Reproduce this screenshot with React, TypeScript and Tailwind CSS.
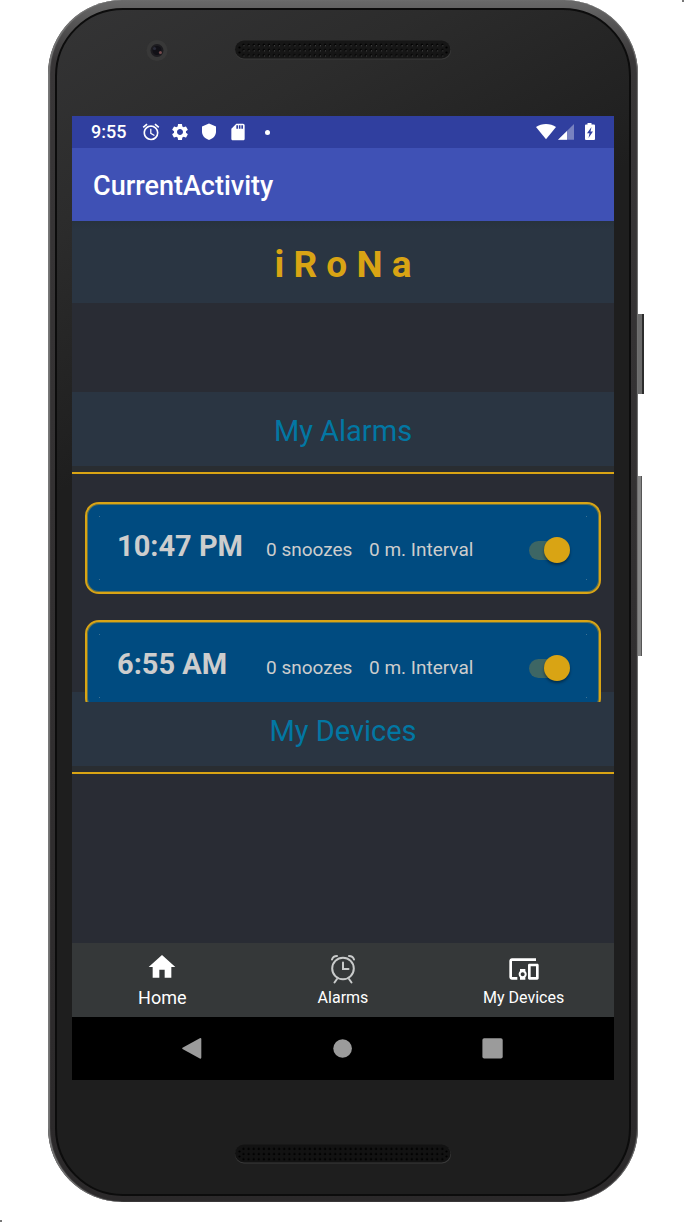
import React, { useId, useState } from "react";
import { MdAlarm, MdHome, MdOutlineDevicesOther, MdSdCard, MdSettings } from "react-icons/md";

type Alarm = { time: string; snoozes: number; interval: number };

const ALARMS: Alarm[] = [
  { time: "10:47 PM", snoozes: 0, interval: 0 },
  { time: "6:55 AM", snoozes: 0, interval: 0 },
];

function Speaker({ light = false }: { light?: boolean }) {
  const id = useId();
  return (
    <svg className="h-5 w-[218px]" viewBox="0 0 218 20" aria-hidden="true">
      <defs>
        <pattern id={id} width="5.1" height="5.2" patternUnits="userSpaceOnUse" x="7" y="2.4">
          <circle cx="2.5" cy="2.5" r="1.2" fill="#020202" />
          {light && <circle cx="2.9" cy="3.3" r="0.6" fill="#4c4c4c" />}
        </pattern>
      </defs>
      <rect x="1" y="1.5" width="216" height="18" rx="9" fill="#3a3a3a" />
      <rect x="1" y="0.5" width="215.5" height="18" rx="9" fill={light ? "#161616" : "#121212"} />
      <rect x="7" y="2.4" width="204" height="15.6" fill={`url(#${id})`} />
      <circle cx="5.5" cy="7.5" r="1.1" fill="#000" />
      <circle cx="5.5" cy="12.5" r="1.1" fill="#000" />
      <circle cx="212.5" cy="7.5" r="1.1" fill="#000" />
      <circle cx="212.5" cy="12.5" r="1.1" fill="#000" />
    </svg>
  );
}

function Camera() {
  return (
    <svg className="h-6 w-6" viewBox="0 0 24 24" aria-hidden="true">
      <circle cx="12" cy="10.500" r="10.5" fill="#383838" />
      <circle cx="12" cy="10.500" r="6.5" fill="#1d1c20" />
      <circle cx="12" cy="10.500" r="4.5" fill="#121117" />
      <circle cx="9.5" cy="8.5" r="1.6" fill="#2a2b38" />
      <circle cx="15.4" cy="12.4" r="1.5" fill="#754b4d" />
    </svg>
  );
}

function StatusBar() {
  return (
    <div className="flex h-8 items-center bg-[#303f9f] pl-[19px] pr-[18px] text-white">
      <span className="w-[50px] text-[18px] font-medium leading-8">9:55</span>
      <div className="flex items-center gap-[9px]">
        <MdAlarm className="size-5" />
        <MdSettings className="size-5" />
        <svg className="size-5" viewBox="0 0 20 20" aria-hidden="true">
          <path d="M10 1.5 17 4.6v5.2c0 3.6-2.6 6.8-7 8.2-4.4-1.4-7-4.600-7-8.200V4.600z" fill="currentColor" />
        </svg>
        <MdSdCard className="size-5" />
        <span className="flex size-5 items-center justify-center">
          <span className="size-[5px] rounded-full bg-white" />
        </span>
      </div>
      <div className="ml-auto flex items-center">
        <svg className="h-5 w-[22px]" viewBox="0 0 22 20" aria-hidden="true">
          <path d="M1 5C6.500.900 15.500.900 21 5L11 17.200z" fill="currentColor" />
        </svg>
        <svg className="mr-[9px] h-5 w-[18px]" viewBox="0 0 18 20" aria-hidden="true">
          <path d="M1 17.800 17 2v15.800z" fill="currentColor" opacity="0.35" />
          <path d="M1 17.800 10 9v8.800z" fill="currentColor" />
        </svg>
        <svg className="h-5 w-[12px]" viewBox="0 0 12 20" aria-hidden="true">
          <path d="M3.500 1h4v1.600H10a1 1 0 0 1 1 1V17a1 1 0 0 1-1 1H2a1 1 0 0 1-1-1V3.600a1 1 0 0 1 1-1h1.500z" fill="currentColor" />
          <path d="M7.500 5 3 11.200h2.500L4.500 16 9 9.600H6.500z" fill="#303f9f" />
        </svg>
      </div>
    </div>
  );
}

function SectionHeader({ title }: { title: string }) {
  return (
    <header>
      <h2 className="bg-[#2a3542] pb-[15px] pt-[19px] text-center text-[29px] font-normal leading-10 text-[#0277a3]">
        {title}
      </h2>
      <div className="h-[6px] bg-[#292d31]" />
      <div className="h-[2px] bg-[#d9a414]" />
    </header>
  );
}

function AlarmCard({ alarm }: { alarm: Alarm }) {
  const [on, setOn] = useState(true);
  return (
    <li className="relative grid h-[92px] shrink-0 grid-cols-[149px_103px_1fr_auto] items-center rounded-[14px] border-2 border-[#d9a414] bg-[#004b80] pl-[30px] pr-7 text-[19px] text-[#cdcdcd] shadow-[inset_0_0_0_1px_rgba(217,164,20,0.45)]">
      <span className="absolute left-3 top-3 size-px bg-[#3d7294]" />
      <span className="absolute right-3 top-3 size-px bg-[#3d7294]" />
      <span className="absolute bottom-3 left-3 size-px bg-[#3d7294]" />
      <span className="absolute bottom-3 right-3 size-px bg-[#3d7294]" />
      <span className="whitespace-nowrap pb-1 text-[29px] font-bold leading-9">{alarm.time}</span>
      <span className="whitespace-nowrap pt-1">{alarm.snoozes} snoozes</span>
      <span className="whitespace-nowrap pt-1">{alarm.interval} m. Interval</span>
      <label className="relative mt-1 flex h-7 w-[42px] items-center">
        <input
          type="checkbox"
          role="switch"
          aria-label={`Alarm at ${alarm.time}`}
          checked={on}
          onChange={(e) => setOn(e.target.checked)}
          className="peer h-[19px] w-[38px] cursor-pointer appearance-none rounded-full bg-[#5f6f78] checked:bg-[#3d6664]"
        />
        <span className="pointer-events-none absolute left-0 size-[26px] rounded-full bg-[#b9b9b9] shadow-[0_2px_3px_rgba(0,0,0,0.4)] peer-checked:left-[15px] peer-checked:bg-[#d9a414]" />
      </label>
    </li>
  );
}

function ClockIcon() {
  return (
    <svg className="size-8" viewBox="-1 -1 32 32" fill="none" stroke="#c9cbcb" strokeWidth="2" strokeLinecap="round" aria-hidden="true">
      <circle cx="15" cy="14.500" r="10.800" />
      <path d="M15 8.500v6.500h5.500" />
      <path d="M4 5.500C4.600 3.400 6.500 2 9 2M26 5.500C25.400 3.400 23.500 2 21 2" />
      <path d="m9 25-2.500 3.500M21 25l2.500 3.500" />
    </svg>
  );
}

function BottomNav() {
  return (
    <nav className="grid h-[74px] grid-cols-3 bg-[#353839] text-white">
      <a href="#home" className="flex flex-col items-center pt-2">
        <MdHome className="size-8" />
        <span className="text-[18px] leading-[30px]">Home</span>
      </a>
      <a href="#alarms" className="flex flex-col items-center pt-[10px]">
        <ClockIcon />
        <span className="text-[16px] leading-[26px]">Alarms</span>
      </a>
      <a href="#devices" className="flex flex-col items-center pt-[10px]">
        <MdOutlineDevicesOther className="size-8" />
        <span className="text-[16px] leading-[26px]">My Devices</span>
      </a>
    </nav>
  );
}

function SystemKeys() {
  return (
    <div className="flex h-[63px] items-center justify-center gap-[122px] bg-black text-[#9b9b9b]">
      <button type="button" aria-label="Back" className="size-7">
        <svg viewBox="0 0 28 28" aria-hidden="true">
          <path d="M3.500 12.800 20.800 3.200Q22.300 2.600 22.300 4v18.600q0 1.500-1.500.900L3.500 14q-.800-.600 0-1.200z" fill="currentColor" />
        </svg>
      </button>
      <button type="button" aria-label="Home screen" className="size-7">
        <svg viewBox="0 0 28 28" aria-hidden="true">
          <circle cx="13.600" cy="13.500" r="9.300" fill="currentColor" />
        </svg>
      </button>
      <button type="button" aria-label="Recent apps" className="size-7">
        <svg viewBox="0 0 28 28" aria-hidden="true">
          <rect x="3.400" y="3.200" width="20.300" height="20.300" rx="1.800" fill="currentColor" />
        </svg>
      </button>
    </div>
  );
}

function Screen() {
  return (
    <main className="flex flex-col bg-[#292c34]">
      <StatusBar />
      <div className="flex h-[73px] items-center bg-[#3f51b5] px-[21px] pt-[3px] text-[27px] font-medium text-white">
        CurrentActivity
      </div>
      <h1 className="mb-[89px] bg-gradient-to-b from-[#27323d] to-[#2a3542] to-10% pb-4 pt-[21px] text-center text-[37px] font-bold leading-[45px] text-[#d9a414]">
        i R o N a
      </h1>
      <section>
        <SectionHeader title="My Alarms" />
        <ul className="relative z-10 -mb-[10px] flex h-[228px] flex-col gap-[26px] overflow-y-auto px-[13px] pt-7 [scrollbar-width:none]">
          {ALARMS.map((a) => (
            <AlarmCard key={a.time} alarm={a} />
          ))}
        </ul>
      </section>
      <section className="pb-[169px]">
        <SectionHeader title="My Devices" />
      </section>
      <BottomNav />
      <SystemKeys />
    </main>
  );
}

export default function App() {
  return (
    <div className="relative bg-white pb-5 pl-12 pr-[46px] font-['Roboto',sans-serif]">
      <span className="absolute right-0 top-0 h-[2px] w-[2px] bg-[#777777]" />
      <span className="absolute bottom-0 left-0 h-[2px] w-[2px] bg-[#777777]" />
      <div className="relative">
        <span className="absolute -right-[6px] top-[314px] h-20 w-2 border-r-2 border-[#2d2d2d] bg-[#6b6b6b]" />
        <span className="absolute -right-[4px] top-[476px] h-[180px] w-[6px] border-r border-[#555555] bg-[#858585]" />
        <div className="relative rounded-[74px] bg-gradient-to-b from-[#6a6a6a] via-[#383637] via-5% to-[#2b292a] px-[7px] pb-[6px] pt-2 shadow-[inset_2px_0_1px_#777777,inset_-1px_0_1px_#777777]">
          <div className="rounded-[68px] border-2 border-[#0c0c0c] bg-linear-[150deg,#343435_0%,#2c2c2c_14%,#1e1e1e_32%,#1e1e1e_100%] px-[15px]">
            <div className="grid h-[106px] grid-cols-[1fr_auto_1fr] items-start pt-[30px]">
              <div className="pl-[73px]">
                <Camera />
              </div>
              <Speaker light />
            </div>
            <Screen />
            <div className="flex h-[114px] items-start justify-center pt-16">
              <Speaker />
            </div>
          </div>
        </div>
      </div>
    </div>
  );
}
